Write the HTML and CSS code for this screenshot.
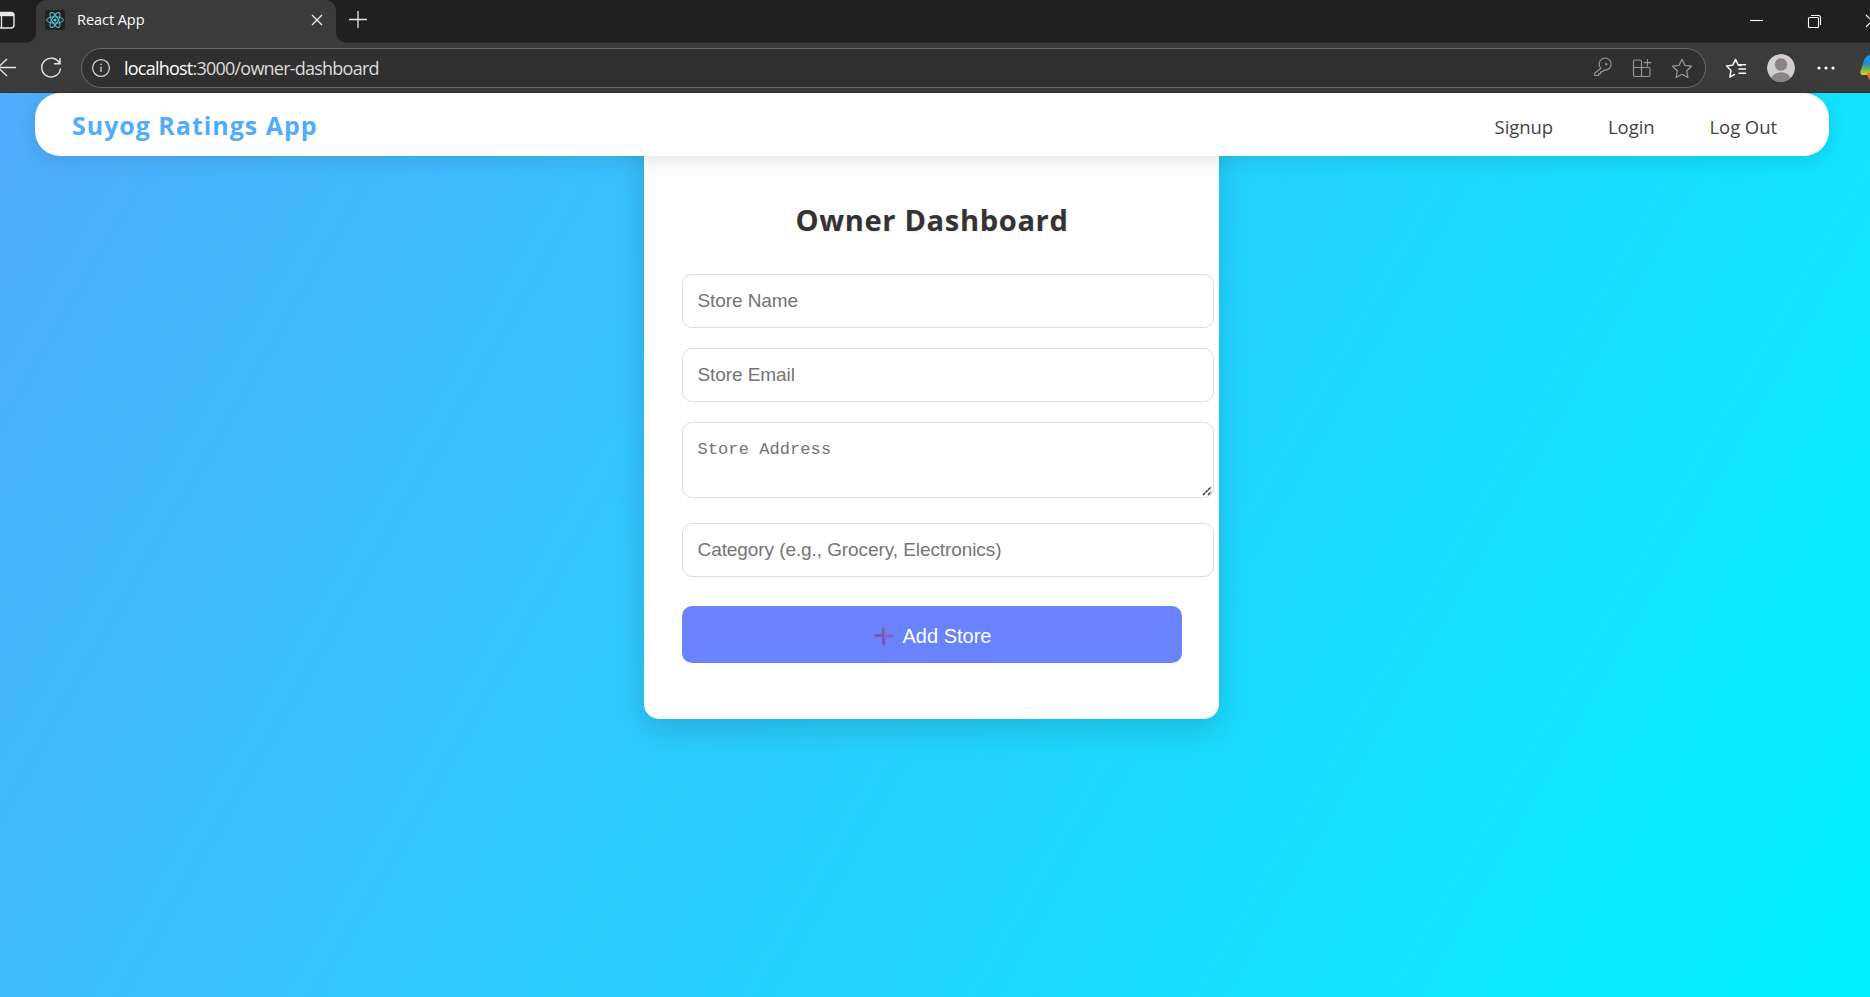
FILE: index.html
```html
<!DOCTYPE html>
<html lang="en">
<head>
<meta charset="utf-8">
<title>React App</title>
<link rel="stylesheet" href="styles.css">
</head>
<body>
<div class="browser">
  <div class="tabstrip">
    <svg class="tabactions" width="30" height="43" fill="none" stroke="#e8e8e8"><rect x="-5" y="12.5" width="19" height="15.5" rx="3" stroke-width="1.4"/><path d="M-4 14.5H14" stroke-width="3.4"/><path d="M1.5 15v13" stroke-width="1.3"/></svg>
    <div class="tab">
      <svg class="favicon" width="20" height="20" viewBox="0 0 20 20"><rect width="20" height="20" rx="2" fill="#222"/><g fill="none" stroke="#58c4dc" stroke-width="1"><ellipse cx="10" cy="10" rx="8.4" ry="3.2"/><ellipse cx="10" cy="10" rx="8.4" ry="3.2" transform="rotate(60 10 10)"/><ellipse cx="10" cy="10" rx="8.4" ry="3.2" transform="rotate(120 10 10)"/></g><circle cx="10" cy="10" r="1.6" fill="#58c4dc"/></svg>
      <span class="tabtitle">React App</span>
      <svg width="12" height="12" viewBox="0 0 12 12" stroke="#eee" stroke-width="1.3"><path d="M1 1l10 10M11 1L1 11"/></svg>
    </div>
    <svg class="newtab" width="20" height="20" stroke="#e8e8e8" stroke-width="1.3"><path d="M1 10.5h18M10 2v17"/></svg>
    <svg class="winbuttons" width="130" height="43" fill="none" stroke="#fff" stroke-width="1.1"><path d="M10 20.5h13"/><rect x="68.5" y="17.5" width="10" height="10" rx="1"/><path d="M71 15.5h7.5q2 0 2 2V25"/><path d="M126 15l12 12M126 27l12-12"/></svg>
  </div>
  <div class="toolbar">
    <svg width="81" height="50" fill="none" stroke="#e8e8e8" stroke-width="1.4"><path d="M-3 24.500H16M7 16L-2 24.500L7 33"/><path d="M59.500 20.200A9.400 9.400 0 1 0 60.500 25.500M60 15v5.700H54"/></svg>
    <div class="address">
      <svg width="20" height="20" fill="none" stroke="#d4d4d4" stroke-width="1.3"><circle cx="10" cy="10" r="8.400"/><path d="M10 8.700v5.300"/><circle cx="10" cy="6.300" r=".5" fill="#d4d4d4" stroke-width=".7"/></svg>
      <span class="url"><b>localhost</b>:3000/owner-dashboard</span>
      <svg class="addressicons" width="100" height="24" viewBox="1593 56 100 24" fill="none" stroke="#969696" stroke-width="1.2" stroke-linejoin="round"><path d="M1600.900 68.300A6 6 0 1 1 1604.300 70L1602.300 71.900H1600.600V73.700H1598.700V75.500H1594.700V73.300Z"/><circle cx="1606.200" cy="64.200" r=".6"/><path d="M1641.500 67.500h-8v-6q0-1.500 1.500-1.500h5q1.500 0 1.500 1.500v13.500q0 1.500-1.500 1.500h-5q-1.500 0-1.500-1.500v-7.500M1641.500 67.500h7q1.500 0 1.500 1.500v6q0 1.500-1.500 1.500h-7M1647.500 59v7.500M1643.700 62.700h7.600"/><path d="M1682 59.300l2.900 6 6.600.9-4.800 4.600 1.200 6.600-5.900-3.200-5.900 3.200 1.200-6.600-4.800-4.600 6.600-.9z"/></svg>
    </div>
    <svg width="164" height="50" viewBox="1706 43 164 50" fill="none">
      <g stroke="#fff" stroke-width="1.4" stroke-linejoin="round" stroke-linecap="round"><path d="M1741 65.500l-2.700-.4-2.800-5.700-2.800 5.700-6.200.9 4.500 4.400-1.200 6.700 4.800-2.700M1738.800 64.800h6.700M1739 69h6.500M1739 73.300h6.500"/></g>
      <clipPath id="av"><circle cx="1781" cy="68" r="14"/></clipPath><g clip-path="url(#av)"><circle cx="1781" cy="68" r="14" fill="#d2d0ce"/><circle cx="1781" cy="64.500" r="6.200" fill="#8a8583"/><ellipse cx="1781" cy="80" rx="10" ry="7.700" fill="#8a8583"/></g>
      <g fill="#fff"><circle cx="1819" cy="68" r="1.600"/><circle cx="1826" cy="68" r="1.600"/><circle cx="1833" cy="68" r="1.600"/></g>
      <defs><linearGradient id="cp" x1="0" y1="0" x2="0" y2="1"><stop offset="0" stop-color="#1b9de8"/><stop offset=".4" stop-color="#2588d4"/><stop offset=".68" stop-color="#62b455"/><stop offset="1" stop-color="#f8c914"/></linearGradient></defs>
      <path d="M1872 55h-2q-5 1-6.500 7l-3 9q-1 4 3 4h8.500z" fill="url(#cp)"/><path d="M1867 73h5v8q-4-1-5-8z" fill="#f2694b"/>
    </svg>
  </div>
</div>
<div class="page">
  <header class="navbar">
    <div class="brand">Suyog Ratings App</div>
    <nav class="links"><a>Signup</a><a>Login</a><a>Log Out</a></nav>
  </header>
  <main class="card">
    <h2>Owner Dashboard</h2>
    <form class="form">
      <input class="field" placeholder="Store Name">
      <input class="field" placeholder="Store Email">
      <div class="areawrap"><textarea class="field area" placeholder="Store Address"></textarea><svg class="grip" width="10" height="10" stroke="#444" stroke-width="1.600"><path d="M1 9L9 1M6 9l3-3" stroke-dasharray="3 .6"/></svg></div>
      <input class="field" placeholder="Category (e.g., Grocery, Electronics)">
      <button class="submit" type="button"><svg width="20" height="20"><defs><linearGradient id="pl" x1="0" y1="0" x2="0" y2="1"><stop offset="0" stop-color="#8a74b8"/><stop offset="1" stop-color="#8b4bcf"/></linearGradient></defs><path d="M8.500 1.500q1.500-2 3 0V8.500h7q2 1.500 0 3h-7v7q-1.500 2-3 0v-7h-7q-2-1.500 0-3h7z" fill="url(#pl)"/><path d="M1 9.200h7.500M9 2v16" stroke="#5b488c" stroke-width=".8"/></svg><span>Add Store</span></button>
    </form>
  </main>
</div>
</body>
</html>
```
FILE: styles.css
```css
* { box-sizing: border-box; }
body { margin: 0; width: 1870px; height: 997px; overflow: hidden; font-family: "Open Sans", "Noto Sans", sans-serif; }
svg { display: block; flex: none; }
.browser { height: 93px; background: #3b3b3b; }
.tabstrip { display: flex; height: 43px; background: linear-gradient(#202020 42px, #2b2b2b 42px); }
.tabactions { margin-right: 6px; }
.tab { position: relative; display: flex; align-items: center; width: 300px; height: 43px; padding: 0 13px 3px 9px; background: #3b3b3b; border-radius: 10px 10px 0 0; color: #fff; }
.tab::before, .tab::after { content: ""; position: absolute; bottom: 0; width: 10px; height: 10px; }
.tab::before { left: -10px; background: radial-gradient(circle at 0 0, transparent 9.500px, #3b3b3b 10px); }
.tab::after { right: -10px; background: radial-gradient(circle at 100% 0, transparent 9.500px, #3b3b3b 10px); }
.tabtitle { flex: 1; margin: -2px 0 0 12px; font-size: 14.500px; letter-spacing: -.05px; }
.newtab { margin: 9px 0 0 12px; }
.winbuttons { margin-left: auto; }
.toolbar { display: flex; height: 50px; background: linear-gradient(#3b3b3b 49px, #333 49px); }
.address { display: flex; align-items: center; width: 1625px; height: 40px; margin-top: 5px; padding: 0 12px 0 9px; border: 1px solid #6b6b6b; border-radius: 20px; background: #303030; }
.url { flex: 1; margin: -1px 0 0 13px; color: #dcdcdc; font-size: 18px; letter-spacing: -.77px; }
.url b { font-weight: 400; color: #fff; }
.page { display: flex; flex-direction: column; align-items: center; height: 904px; background: linear-gradient(120deg, #4facfe 0%, #00f2fe 100%); }
.navbar { position: relative; z-index: 1; flex: none; display: flex; align-items: center; justify-content: space-between; align-self: flex-start; width: 1794px; height: 63px; margin-left: 35px; padding: 0 52px 0 37px; border-radius: 25px; background: #fff; box-shadow: 0 5px 19px rgba(0, 0, 0, .1); }
.brand { color: #4facfe; font-size: 25px; font-weight: 700; letter-spacing: .97px; margin-top: 1px; }
.links { display: flex; gap: 55px; color: #444; font-size: 18.500px; letter-spacing: -.07px; margin-top: 4px; }
.card { flex: none; width: 575px; height: 593px; margin: -30px 7px 0 0; padding: 73px 37px 0 38px; border-radius: 15px; background: #fff; box-shadow: 0 10px 31px rgba(0, 0, 0, .15); }
h2 { height: 45px; margin: 0; text-align: center; color: #333; font-size: 29px; line-height: 42px; letter-spacing: .7px; text-shadow: 1px 1px 2px rgba(0, 0, 0, .1); }
.form { display: flex; flex-direction: column; align-items: flex-start; gap: 20px; margin-top: 30px; }
.field { display: block; width: 532px; height: 54px; padding: 15px 14.500px; border: 1px solid #ddd; border-radius: 10px; outline: 0; background: #fff; font: 19px "Liberation Sans", Arial, sans-serif; letter-spacing: -.08px; }
.field::placeholder { color: #757575; opacity: 1; }
.areawrap { position: relative; margin-bottom: 5px; }
.area { height: 76px; padding-top: 17px; resize: none; font: 17px "Liberation Mono", monospace; letter-spacing: .08px; }
.grip { position: absolute; right: 2px; bottom: 2px; }
.submit { display: flex; align-items: center; justify-content: center; gap: 9px; width: 500px; height: 57px; margin-top: 9px; padding: 3px 0 0 1px; border: 0; border-radius: 10px; background: #6a82fb; color: #fff; font: 20px "Liberation Sans", Arial, sans-serif; }
```
